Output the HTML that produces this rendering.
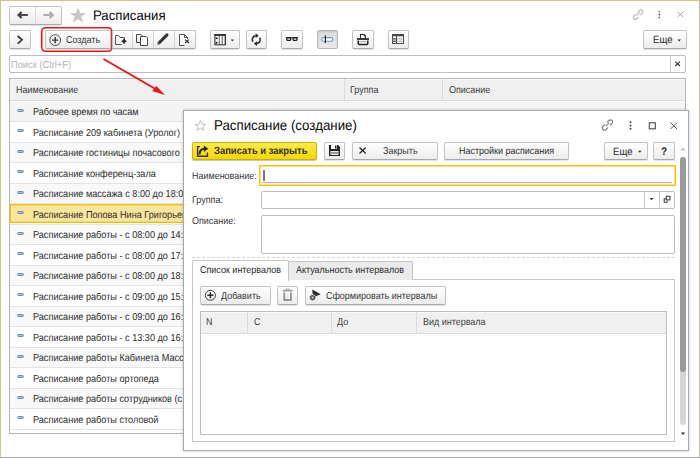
<!DOCTYPE html>
<html><head><meta charset="utf-8"><style>
html,body{margin:0;padding:0;width:700px;height:458px;overflow:hidden;background:#fff;position:relative;font-family:"Liberation Sans", sans-serif}
.a{position:absolute;box-sizing:content-box}
.t{position:absolute;white-space:nowrap;font-family:"Liberation Sans", sans-serif;text-rendering:geometricPrecision}
svg.a{overflow:visible}
.btn{position:absolute;border:1px solid #c3c3c3;border-bottom-color:#a9a9a9;border-radius:2px;background:linear-gradient(#ffffff,#ececec);box-shadow:0 1px 1px rgba(0,0,0,.12)}
</style></head><body>
<div class="a" style="left:0px;top:0px;width:700px;height:1px;background:#cfc688"></div>
<div class="a" style="left:0px;top:0px;width:1px;height:458px;background:#cfc688"></div>
<div class="a" style="left:699px;top:0px;width:1px;height:458px;background:#cfc688"></div>
<div class="a" style="left:0px;top:457px;width:700px;height:1px;background:#a8a8a8"></div>
<div class="btn" style="left:9px;top:6px;width:51px;height:17px;"></div>
<div class="a" style="left:35px;top:7px;width:1px;height:17px;background:#d8d8d8"></div>
<svg class="a" style="left:14px;top:9px;" width="40" height="13" viewBox="14 9 40 13"><path d="M21.6 12 L18.6 15 L21.6 18" fill="none" stroke="#444" stroke-width="2.3" stroke-linejoin="miter"/><path d="M19.2 15 H27.8" stroke="#444" stroke-width="1.9"/><path d="M49.6 12 L52.6 15 L49.6 18" fill="none" stroke="#ababab" stroke-width="2.3"/><path d="M43.2 15 H52" stroke="#ababab" stroke-width="1.9"/></svg>
<svg class="a" style="left:69px;top:7px;" width="18" height="16" viewBox="0 0 18 16"><path d="M9 0.5 L11.2 6 L17 6.2 L12.4 9.8 L14.2 15.5 L9 12.2 L3.8 15.5 L5.6 9.8 L1 6.2 L6.8 6 Z" fill="#c9c9c9"/></svg>
<span class="t" style="left:92.8px;top:7.84px;font-size:13.728px;line-height:16px;color:#0a0a0a;font-weight:400;transform:scaleX(0.9615);transform-origin:0 0;">Расписания</span>
<svg class="a" style="left:631.5px;top:9.3px;" width="13" height="11" viewBox="0 0 13 11"><g fill="none" stroke="#bdbdbd" stroke-width="1.2"><path d="M5.6 3.3 L7.5 1.4 a1.9 1.9 0 0 1 2.8 2.8 L8.4 6.1"/><path d="M6.6 7.9 L4.7 9.8 a1.9 1.9 0 0 1 -2.8 -2.8 L3.8 5.1"/><path d="M4.5 6.7 L7.7 3.5"/></g></svg>
<svg class="a" style="left:658px;top:10px;" width="3" height="9" viewBox="0 0 3 9"><circle cx="1.3" cy="1.6" r="0.9" fill="#6a6a6a"/><circle cx="1.3" cy="4.5" r="0.9" fill="#6a6a6a"/><circle cx="1.3" cy="7.4" r="0.9" fill="#6a6a6a"/></svg>
<svg class="a" style="left:676px;top:11px;" width="8" height="8" viewBox="676 11 8 8"><path d="M677.7 12 L683.1 17 M683.1 12 L677.7 17" stroke="#9a9a9a" stroke-width="0.9"/></svg>
<div class="btn" style="left:9px;top:30px;width:20px;height:17px;"></div>
<svg class="a" style="left:16px;top:35px;" width="8" height="10" viewBox="0 0 8 10"><path d="M1.7 1 L6 4.8 L1.7 8.6" fill="none" stroke="#333" stroke-width="1.7"/></svg>
<div class="btn" style="left:45px;top:30px;width:64px;height:17px;"></div>
<svg class="a" style="left:49px;top:34px;" width="13" height="13" viewBox="0 0 13 13"><circle cx="6.2" cy="6.1" r="5.4" fill="none" stroke="#505050" stroke-width="1"/><path d="M6.2 3 V9.2 M3.1 6.1 H9.3" stroke="#333" stroke-width="1.4"/></svg>
<span class="t" style="left:66px;top:35.07px;font-size:9.900px;line-height:12px;color:#383838;font-weight:400;transform:scaleX(0.9091);transform-origin:0 0;">Создать</span>
<svg class="a" style="left:40px;top:26px;" width="74" height="27" viewBox="0 0 74 27"><rect x="1.7" y="1.7" width="70.2" height="23.6" rx="4" fill="none" stroke="#ea1219" stroke-width="1.6"/></svg>
<div class="btn" style="left:112px;top:30px;width:82px;height:17px;"></div>
<div class="a" style="left:132px;top:31px;width:1px;height:17px;background:#d4d4d4"></div>
<div class="a" style="left:153px;top:31px;width:1px;height:17px;background:#d4d4d4"></div>
<div class="a" style="left:174px;top:31px;width:1px;height:17px;background:#d4d4d4"></div>
<svg class="a" style="left:112px;top:31px;" width="20" height="17" viewBox="112 31 20 17"><path d="M115.5 44.5 V35.5 H118.5 L120 37.5 H124.5 V39 M115.5 44.5 H121.5" fill="none" stroke="#555" stroke-width="1"/><path d="M121.7 41.2 H126.3 M124 38.9 V43.5" stroke="#2a2a2a" stroke-width="1.9"/></svg>
<svg class="a" style="left:133px;top:31px;" width="20" height="17" viewBox="133 31 20 17"><path d="M136.5 34.5 H141 L142.5 36 V36.5 M136.5 34.5 V42.5 H140.5" fill="none" stroke="#444" stroke-width="1"/><path d="M140.5 36.5 H146 L147.5 38 V45.5 H140.5 Z" fill="#fff" stroke="#444" stroke-width="1"/></svg>
<svg class="a" style="left:154px;top:31px;" width="20" height="17" viewBox="154 31 20 17"><path d="M159.3 42.6 L167 34.9" stroke="#333" stroke-width="3" stroke-linecap="round"/><path d="M157 45 L157.9 42 L160.1 44.1 Z" fill="#666"/></svg>
<svg class="a" style="left:175px;top:31px;" width="20" height="17" viewBox="175 31 20 17"><path d="M179.5 34.5 H184.5 L187.5 37.5 V39 M179.5 34.5 V45.5 H184.5 M184.5 34.5 V37.5 H187.5" fill="none" stroke="#555" stroke-width="1"/><path d="M185.2 39.6 L188.8 43 M188.8 39.6 L185.2 43" stroke="#333" stroke-width="1.3"/></svg>
<div class="btn" style="left:210px;top:30px;width:28px;height:17px;"></div>
<svg class="a" style="left:212px;top:32px;" width="16" height="15" viewBox="212 32 16 15"><rect x="214.5" y="34" width="11.5" height="11.2" fill="#8a8a8a"/><rect x="214.5" y="34" width="11.5" height="1.7" fill="#1e1e1e"/><rect x="215" y="34.5" width="10.5" height="10.2" fill="none" stroke="#333" stroke-width="1"/><rect x="215.6" y="36" width="3" height="8.2" fill="#fff"/><rect x="220" y="36" width="1.6" height="8.2" fill="#fff"/><rect x="223" y="36" width="1.4" height="8.2" fill="#fff"/><path d="M215.8 37 L218.2 38.2 L215.8 39.4 Z M215.8 41.6 L218.2 42.8 L215.8 44 Z" fill="#111"/></svg>
<svg class="a" style="left:229px;top:38px;" width="7" height="5" viewBox="229 38 7 5"><path d="M230.5 39.4 H234.3 L232.4 41.4 Z" fill="#444"/></svg>
<div class="btn" style="left:246px;top:30px;width:19px;height:17px;"></div>
<svg class="a" style="left:248px;top:32px;" width="17" height="15" viewBox="248 32 17 15"><g fill="none" stroke="#2a2a2a" stroke-width="1.6"><path d="M252.84 41.60 A4 4 0 0 1 255.61 35.66"/><path d="M259.76 37.60 A4 4 0 0 1 256.99 43.54"/></g><path d="M255.61 33.26 L258.81 35.66 L255.61 38.06 Z" fill="#2a2a2a"/><path d="M256.99 41.14 L253.79 43.54 L256.99 45.94 Z" fill="#2a2a2a"/></svg>
<div class="btn" style="left:281px;top:30px;width:20px;height:17px;"></div>
<svg class="a" style="left:284px;top:35px;" width="16" height="8" viewBox="284 35 16 8"><rect x="286.8" y="37.7" width="3.8" height="2.7" rx="0.9" fill="#fff" stroke="#1e1e1e" stroke-width="1.3"/><rect x="293.1" y="37.7" width="3.8" height="2.7" rx="0.9" fill="#fff" stroke="#1e1e1e" stroke-width="1.3"/><path d="M285.8 37.8 H298" stroke="#1e1e1e" stroke-width="1.1"/></svg>
<div class="a" style="left:317px;top:30px;width:19px;height:17px;border:1px solid #b9b9b9;border-radius:2px;background:linear-gradient(#dcdcdc,#e8e8e8);box-shadow:inset 0 1px 2px rgba(0,0,0,.12)"></div>
<svg class="a" style="left:318px;top:33px;" width="17" height="12" viewBox="318 33 17 12"><rect x="321.6" y="37.6" width="11.2" height="3.7" rx="1.85" fill="#fafafa" stroke="#6c9ccb" stroke-width="1.1"/><path d="M325.4 35.6 V42.9" stroke="#222" stroke-width="1.2"/></svg>
<div class="btn" style="left:352px;top:30px;width:20px;height:17px;"></div>
<svg class="a" style="left:354px;top:32px;" width="17" height="15" viewBox="354 32 17 15"><path d="M360.5 38.3 V34.5 H364 L365.5 36 V38.3" fill="#fff" stroke="#2a2a2a" stroke-width="1.1"/><path d="M364 34.5 V36 H365.5" fill="none" stroke="#2a2a2a" stroke-width="0.8"/><rect x="357" y="38.2" width="12" height="1.6" fill="#111"/><path d="M358.2 40.6 V43.6 Q358.2 44.6 359.2 44.6 H366.8 Q367.8 44.6 367.8 43.6 V40.6" fill="#fff" stroke="#222" stroke-width="1.5"/><path d="M359.5 41.8 H366.5" stroke="#888" stroke-width="0.8"/></svg>
<div class="btn" style="left:388px;top:30px;width:19px;height:17px;"></div>
<svg class="a" style="left:390px;top:32px;" width="16" height="14" viewBox="390 32 16 14"><rect x="392.5" y="34.5" width="11" height="9" fill="#fff" stroke="#4a4a4a" stroke-width="1"/><rect x="392.5" y="34.5" width="11" height="1.8" fill="#4a4a4a"/><path d="M392.5 38.9 H403.5 M392.5 41.2 H403.5" stroke="#9a9a9a" stroke-width="0.9"/><path d="M396.5 36 V43.5" stroke="#4a4a4a" stroke-width="1"/><path d="M392.5 38.9 H396.5 M392.5 41.2 H396.5" stroke="#444" stroke-width="1"/></svg>
<div class="btn" style="left:643px;top:30px;width:42px;height:17px;"></div>
<span class="t" style="left:652.6px;top:34.24px;font-size:10.560px;line-height:13px;color:#2a2a2a;font-weight:400;transform:scaleX(0.9091);transform-origin:0 0;">Еще</span>
<svg class="a" style="left:675px;top:37px;" width="8" height="6" viewBox="675 37 8 6"><path d="M677.4 39.6 H681 L679.2 41.6 Z" fill="#333"/></svg>
<div class="a" style="left:9px;top:55px;width:675px;height:16px;border:1px solid #bdbdbd;border-radius:2px;background:#fff"></div>
<div class="a" style="left:670px;top:56px;width:1px;height:16px;background:#c8c8c8"></div>
<svg class="a" style="left:673px;top:59px;" width="9" height="9" viewBox="673 59 9 9"><path d="M675.2 61.6 L680 66 M680 61.6 L675.2 66" stroke="#3a3a3a" stroke-width="1.2"/></svg>
<span class="t" style="left:11.3px;top:59.76px;font-size:10.230px;line-height:12px;color:#b4b4bc;font-weight:400;transform:scaleX(0.9091);transform-origin:0 0;">Поиск (Ctrl+F)</span>
<div class="a" style="left:9px;top:78px;width:675px;height:354px;border:1px solid #b5b5b5;background:#fff"></div>
<div class="a" style="left:10px;top:79px;width:675px;height:21px;background:#f0f0f0"></div>
<div class="a" style="left:10px;top:79px;width:675px;height:1px;background:#fafafa"></div>
<div class="a" style="left:10px;top:100px;width:675px;height:1px;background:#dcdcdc"></div>
<div class="a" style="left:344px;top:79px;width:1px;height:21px;background:#dadada"></div>
<div class="a" style="left:442px;top:79px;width:1px;height:21px;background:#dadada"></div>
<span class="t" style="left:15.8px;top:84.57px;font-size:9.900px;line-height:12px;color:#383838;font-weight:400;transform:scaleX(0.9091);transform-origin:0 0;">Наименование</span>
<span class="t" style="left:350.3px;top:84.57px;font-size:9.900px;line-height:12px;color:#383838;font-weight:400;transform:scaleX(0.9091);transform-origin:0 0;">Группа</span>
<span class="t" style="left:448.5px;top:84.57px;font-size:9.900px;line-height:12px;color:#383838;font-weight:400;transform:scaleX(0.9091);transform-origin:0 0;">Описание</span>
<div class="a" style="left:10px;top:102px;width:675px;height:19px;background:#f4f4f4"></div>
<div class="a" style="left:10px;top:121px;width:675px;height:1px;background:#e4e4e4"></div>
<svg class="a" style="left:16px;top:108px;" width="10" height="6" viewBox="16 108 10 6"><rect x="17.5" y="109.5" width="6" height="2" rx="1" fill="#adc4d9" stroke="#6b8aa9" stroke-width="1"/></svg>
<span class="t" style="left:32.8px;top:107.21px;font-size:10.065px;line-height:12px;color:#2c2c2c;font-weight:400;transform:scaleX(0.9091);transform-origin:0 0;">Рабочее время по часам</span>
<div class="a" style="left:10px;top:142px;width:675px;height:1px;background:#e4e4e4"></div>
<svg class="a" style="left:16px;top:128px;" width="10" height="6" viewBox="16 128 10 6"><rect x="17.5" y="129.5" width="6" height="2" rx="1" fill="#adc4d9" stroke="#6b8aa9" stroke-width="1"/></svg>
<span class="t" style="left:32.8px;top:127.71px;font-size:10.065px;line-height:12px;color:#2c2c2c;font-weight:400;transform:scaleX(0.9091);transform-origin:0 0;">Расписание 209 кабинета (Уролог)</span>
<div class="a" style="left:10px;top:143px;width:675px;height:19px;background:#f9f9f9"></div>
<div class="a" style="left:10px;top:162px;width:675px;height:1px;background:#e4e4e4"></div>
<svg class="a" style="left:16px;top:149px;" width="10" height="6" viewBox="16 149 10 6"><rect x="17.5" y="150.5" width="6" height="2" rx="1" fill="#adc4d9" stroke="#6b8aa9" stroke-width="1"/></svg>
<span class="t" style="left:32.8px;top:148.21px;font-size:10.065px;line-height:12px;color:#2c2c2c;font-weight:400;transform:scaleX(0.9091);transform-origin:0 0;">Расписание гостиницы почасового</span>
<div class="a" style="left:10px;top:183px;width:675px;height:1px;background:#e4e4e4"></div>
<svg class="a" style="left:16px;top:169px;" width="10" height="6" viewBox="16 169 10 6"><rect x="17.5" y="170.5" width="6" height="2" rx="1" fill="#adc4d9" stroke="#6b8aa9" stroke-width="1"/></svg>
<span class="t" style="left:32.8px;top:168.71px;font-size:10.065px;line-height:12px;color:#2c2c2c;font-weight:400;transform:scaleX(0.9091);transform-origin:0 0;">Расписание конференц-зала</span>
<div class="a" style="left:10px;top:184px;width:675px;height:19px;background:#f9f9f9"></div>
<div class="a" style="left:10px;top:203px;width:675px;height:1px;background:#e4e4e4"></div>
<svg class="a" style="left:16px;top:190px;" width="10" height="6" viewBox="16 190 10 6"><rect x="17.5" y="191.5" width="6" height="2" rx="1" fill="#adc4d9" stroke="#6b8aa9" stroke-width="1"/></svg>
<span class="t" style="left:32.8px;top:189.21px;font-size:10.065px;line-height:12px;color:#2c2c2c;font-weight:400;transform:scaleX(0.9091);transform-origin:0 0;">Расписание массажа с 8:00 до 18:00</span>
<div class="a" style="left:10px;top:204px;width:673px;height:17px;border:1px solid #f2c000;background:#fbe59c;box-shadow:inset 0 1px 0 #f8d770, inset 0 -1px 0 #f8d770"></div>
<div class="a" style="left:10px;top:224px;width:675px;height:1px;background:#e4e4e4"></div>
<svg class="a" style="left:16px;top:210px;" width="10" height="6" viewBox="16 210 10 6"><rect x="17.5" y="211.5" width="6" height="2" rx="1" fill="#adc4d9" stroke="#6b8aa9" stroke-width="1"/></svg>
<span class="t" style="left:32.8px;top:209.71px;font-size:10.065px;line-height:12px;color:#2c2c2c;font-weight:400;transform:scaleX(0.9091);transform-origin:0 0;">Расписание Попова Нина Григорьевна</span>
<div class="a" style="left:10px;top:225px;width:675px;height:19px;background:#f9f9f9"></div>
<div class="a" style="left:10px;top:244px;width:675px;height:1px;background:#e4e4e4"></div>
<svg class="a" style="left:16px;top:231px;" width="10" height="6" viewBox="16 231 10 6"><rect x="17.5" y="232.5" width="6" height="2" rx="1" fill="#adc4d9" stroke="#6b8aa9" stroke-width="1"/></svg>
<span class="t" style="left:32.8px;top:230.21px;font-size:10.065px;line-height:12px;color:#2c2c2c;font-weight:400;transform:scaleX(0.9091);transform-origin:0 0;">Расписание работы - с 08:00 до 14:00</span>
<div class="a" style="left:10px;top:265px;width:675px;height:1px;background:#e4e4e4"></div>
<svg class="a" style="left:16px;top:251px;" width="10" height="6" viewBox="16 251 10 6"><rect x="17.5" y="252.5" width="6" height="2" rx="1" fill="#adc4d9" stroke="#6b8aa9" stroke-width="1"/></svg>
<span class="t" style="left:32.8px;top:250.71px;font-size:10.065px;line-height:12px;color:#2c2c2c;font-weight:400;transform:scaleX(0.9091);transform-origin:0 0;">Расписание работы - с 08:00 до 17:00</span>
<div class="a" style="left:10px;top:266px;width:675px;height:19px;background:#f9f9f9"></div>
<div class="a" style="left:10px;top:285px;width:675px;height:1px;background:#e4e4e4"></div>
<svg class="a" style="left:16px;top:272px;" width="10" height="6" viewBox="16 272 10 6"><rect x="17.5" y="273.5" width="6" height="2" rx="1" fill="#adc4d9" stroke="#6b8aa9" stroke-width="1"/></svg>
<span class="t" style="left:32.8px;top:271.21px;font-size:10.065px;line-height:12px;color:#2c2c2c;font-weight:400;transform:scaleX(0.9091);transform-origin:0 0;">Расписание работы - с 08:00 до 18:00</span>
<div class="a" style="left:10px;top:306px;width:675px;height:1px;background:#e4e4e4"></div>
<svg class="a" style="left:16px;top:292px;" width="10" height="6" viewBox="16 292 10 6"><rect x="17.5" y="293.5" width="6" height="2" rx="1" fill="#adc4d9" stroke="#6b8aa9" stroke-width="1"/></svg>
<span class="t" style="left:32.8px;top:291.71px;font-size:10.065px;line-height:12px;color:#2c2c2c;font-weight:400;transform:scaleX(0.9091);transform-origin:0 0;">Расписание работы - с 09:00 до 15:00</span>
<div class="a" style="left:10px;top:307px;width:675px;height:19px;background:#f9f9f9"></div>
<div class="a" style="left:10px;top:326px;width:675px;height:1px;background:#e4e4e4"></div>
<svg class="a" style="left:16px;top:313px;" width="10" height="6" viewBox="16 313 10 6"><rect x="17.5" y="314.5" width="6" height="2" rx="1" fill="#adc4d9" stroke="#6b8aa9" stroke-width="1"/></svg>
<span class="t" style="left:32.8px;top:312.21px;font-size:10.065px;line-height:12px;color:#2c2c2c;font-weight:400;transform:scaleX(0.9091);transform-origin:0 0;">Расписание работы - с 09:00 до 16:00</span>
<div class="a" style="left:10px;top:347px;width:675px;height:1px;background:#e4e4e4"></div>
<svg class="a" style="left:16px;top:333px;" width="10" height="6" viewBox="16 333 10 6"><rect x="17.5" y="334.5" width="6" height="2" rx="1" fill="#adc4d9" stroke="#6b8aa9" stroke-width="1"/></svg>
<span class="t" style="left:32.8px;top:332.71px;font-size:10.065px;line-height:12px;color:#2c2c2c;font-weight:400;transform:scaleX(0.9091);transform-origin:0 0;">Расписание работы - с 13:30 до 16:00</span>
<div class="a" style="left:10px;top:348px;width:675px;height:19px;background:#f9f9f9"></div>
<div class="a" style="left:10px;top:367px;width:675px;height:1px;background:#e4e4e4"></div>
<svg class="a" style="left:16px;top:354px;" width="10" height="6" viewBox="16 354 10 6"><rect x="17.5" y="355.5" width="6" height="2" rx="1" fill="#adc4d9" stroke="#6b8aa9" stroke-width="1"/></svg>
<span class="t" style="left:32.8px;top:353.21px;font-size:10.065px;line-height:12px;color:#2c2c2c;font-weight:400;transform:scaleX(0.9091);transform-origin:0 0;">Расписание работы Кабинета Массажа</span>
<div class="a" style="left:10px;top:388px;width:675px;height:1px;background:#e4e4e4"></div>
<svg class="a" style="left:16px;top:374px;" width="10" height="6" viewBox="16 374 10 6"><rect x="17.5" y="375.5" width="6" height="2" rx="1" fill="#adc4d9" stroke="#6b8aa9" stroke-width="1"/></svg>
<span class="t" style="left:32.8px;top:373.71px;font-size:10.065px;line-height:12px;color:#2c2c2c;font-weight:400;transform:scaleX(0.9091);transform-origin:0 0;">Расписание работы ортопеда</span>
<div class="a" style="left:10px;top:389px;width:675px;height:19px;background:#f9f9f9"></div>
<div class="a" style="left:10px;top:408px;width:675px;height:1px;background:#e4e4e4"></div>
<svg class="a" style="left:16px;top:395px;" width="10" height="6" viewBox="16 395 10 6"><rect x="17.5" y="396.5" width="6" height="2" rx="1" fill="#adc4d9" stroke="#6b8aa9" stroke-width="1"/></svg>
<span class="t" style="left:32.8px;top:394.21px;font-size:10.065px;line-height:12px;color:#2c2c2c;font-weight:400;transform:scaleX(0.9091);transform-origin:0 0;">Расписание работы сотрудников (с</span>
<div class="a" style="left:10px;top:429px;width:675px;height:1px;background:#e4e4e4"></div>
<svg class="a" style="left:16px;top:415px;" width="10" height="6" viewBox="16 415 10 6"><rect x="17.5" y="416.5" width="6" height="2" rx="1" fill="#adc4d9" stroke="#6b8aa9" stroke-width="1"/></svg>
<span class="t" style="left:32.8px;top:414.71px;font-size:10.065px;line-height:12px;color:#2c2c2c;font-weight:400;transform:scaleX(0.9091);transform-origin:0 0;">Расписание работы столовой</span>
<svg class="a" style="left:95px;top:52px;" width="80" height="50" viewBox="0 0 80 50"><path d="M8.5 7 L64 39" stroke="#ec1515" stroke-width="1.9"/><path d="M70 43 L57.2 39 L61.4 34 Z" fill="#ec1515"/></svg>
<div class="a" style="left:183px;top:110px;width:504px;height:339px;border:1px solid #a9a9a9;background:#fff;box-shadow:0 0 3px rgba(0,0,0,.22)"></div>
<svg class="a" style="left:193px;top:119px;" width="15" height="13" viewBox="193 119 15 13"><path d="M200.4 120.6 L201.9 124.2 L205.6 124.4 L202.7 126.7 L203.7 130.3 L200.4 128.2 L197.1 130.3 L198.1 126.7 L195.2 124.4 L198.9 124.2 Z" fill="none" stroke="#b8b8b8" stroke-width="0.9"/></svg>
<span class="t" style="left:214px;top:117.12px;font-size:14.098px;line-height:17px;color:#0a0a0a;font-weight:400;transform:scaleX(0.9434);transform-origin:0 0;">Расписание (создание)</span>
<svg class="a" style="left:601px;top:119px;" width="14" height="12" viewBox="0 0 14 12"><g fill="none" stroke="#808080" stroke-width="1.1"><path d="M6 3.5 L8 1.5 a2 2 0 0 1 3 3 L9 6.5"/><path d="M7 8.5 L5 10.5 a2 2 0 0 1 -3 -3 L4 5.5"/><path d="M4.8 7.2 L8.2 3.8"/></g></svg>
<svg class="a" style="left:629px;top:121px;" width="3" height="9" viewBox="0 0 3 9"><circle cx="1.5" cy="1.3" r="1" fill="#444"/><circle cx="1.5" cy="4.5" r="1" fill="#444"/><circle cx="1.5" cy="7.7" r="1" fill="#444"/></svg>
<svg class="a" style="left:648px;top:121px;" width="9" height="9" viewBox="0 0 9 9"><rect x="1.3" y="1.8" width="6" height="6" fill="none" stroke="#484848" stroke-width="1.1"/></svg>
<svg class="a" style="left:670px;top:122px;" width="8" height="8" viewBox="0 0 8 8"><path d="M0.5 0.5 L7 7 M7 0.5 L0.5 7" stroke="#555" stroke-width="1"/></svg>
<div class="a" style="left:192px;top:142px;width:123px;height:16px;border:1px solid #c9b200;border-radius:2px;background:linear-gradient(#ffe94d,#f5d800);box-shadow:0 1px 1px rgba(0,0,0,.25)"></div>
<svg class="a" style="left:195px;top:144px;" width="15" height="15" viewBox="195 144 15 15"><path d="M200 146.6 H197.6 V156.2 H207.4 V152.5" fill="none" stroke="#333" stroke-width="1.4"/><path d="M199.6 154.5 C199.6 150.5 201.5 148.8 204.5 148.8" fill="none" stroke="#2a2a2a" stroke-width="2"/><path d="M203.8 145.6 L208.4 148.8 L203.8 152 Z" fill="#2a2a2a"/></svg>
<span class="t" style="left:213.5px;top:146.40px;font-size:10.395px;line-height:12px;color:#303030;font-weight:700;transform:scaleX(0.9091);transform-origin:0 0;">Записать и закрыть</span>
<div class="btn" style="left:324px;top:142px;width:19px;height:16px;"></div>
<svg class="a" style="left:328px;top:144px;" width="13" height="13" viewBox="0 0 13 13"><path d="M1 1 H10 L12 3 V12 H1 Z" fill="#222"/><rect x="3" y="1" width="6" height="4" fill="#fff"/><rect x="7" y="1.5" width="1.5" height="3" fill="#222"/><rect x="2.5" y="7" width="8" height="4" fill="#eee"/><path d="M3 9 H10" stroke="#222" stroke-width="0.8"/></svg>
<div class="btn" style="left:352px;top:142px;width:84px;height:16px;"></div>
<svg class="a" style="left:357px;top:145px;" width="11" height="11" viewBox="357 145 11 11"><path d="M359.5 147.5 L365.8 153.6 M365.8 147.5 L359.5 153.6" stroke="#2e2e2e" stroke-width="1.35"/></svg>
<span class="t" style="left:382.9px;top:146.27px;font-size:9.900px;line-height:12px;color:#383838;font-weight:400;transform:scaleX(0.9091);transform-origin:0 0;">Закрыть</span>
<div class="btn" style="left:444px;top:142px;width:123px;height:16px;"></div>
<span class="t" style="left:459px;top:146.27px;font-size:9.900px;line-height:12px;color:#2a2a2a;font-weight:400;transform:scaleX(0.9091);transform-origin:0 0;">Настройки расписания</span>
<div class="btn" style="left:604px;top:142px;width:42px;height:16px;"></div>
<span class="t" style="left:613.4px;top:145.64px;font-size:10.560px;line-height:13px;color:#2a2a2a;font-weight:400;transform:scaleX(0.9091);transform-origin:0 0;">Еще</span>
<svg class="a" style="left:636px;top:149px;" width="8" height="5" viewBox="636 149 8 5"><path d="M638.1 150.8 H641.5 L639.8 152.8 Z" fill="#333"/></svg>
<div class="btn" style="left:653px;top:142px;width:20px;height:16px;"></div>
<span class="t" style="left:660.8px;top:145.59px;font-size:11.000px;line-height:13px;color:#222;font-weight:700;transform:scaleX(0.9091);transform-origin:0 0;">?</span>
<svg class="a" style="left:680px;top:147px;" width="6" height="4" viewBox="0 0 6 4"><path d="M0 3.5 H6 L3 0 Z" fill="#ccc"/></svg>
<div class="a" style="left:680px;top:157px;width:6px;height:268px;border-radius:3px;background:#d6d6d6"></div>
<div class="a" style="left:680px;top:157px;width:6px;height:215px;border-radius:3px;background:#9a9a9a"></div>
<svg class="a" style="left:679px;top:430px;" width="8" height="7" viewBox="679 430 8 7"><path d="M680.8 432.4 H685.2 L683 435 Z" fill="#333"/></svg>
<span class="t" style="left:192.1px;top:170.97px;font-size:9.900px;line-height:12px;color:#363636;font-weight:400;transform:scaleX(0.9091);transform-origin:0 0;">Наименование:</span>
<div class="a" style="left:259px;top:165px;width:415px;height:19px;border:1px solid #f4c20d;box-shadow:inset 0 0 0 1px #fce27a"></div>
<div class="a" style="left:262px;top:182px;width:410px;height:1px;background:#f59a9a"></div>
<div class="a" style="left:263px;top:170px;width:2px;height:11px;background:#7a7a7a"></div>
<span class="t" style="left:192.1px;top:194.97px;font-size:9.900px;line-height:12px;color:#363636;font-weight:400;transform:scaleX(0.9091);transform-origin:0 0;">Группа:</span>
<div class="a" style="left:261px;top:191px;width:412px;height:16px;border:1px solid #bdbdbd;border-radius:2px"></div>
<div class="a" style="left:644px;top:192px;width:1px;height:16px;background:#c8c8c8"></div>
<div class="a" style="left:659px;top:192px;width:1px;height:16px;background:#c8c8c8"></div>
<svg class="a" style="left:648px;top:196px;" width="8" height="6" viewBox="648 196 8 6"><path d="M649.6 198 H653.6 L651.6 200.2 Z" fill="#333"/></svg>
<svg class="a" style="left:662px;top:194px;" width="10" height="10" viewBox="662 194 10 10"><path d="M666 198.8 H664.2 V202.2 H667.2 V201" fill="none" stroke="#444" stroke-width="1.1"/><rect x="666.3" y="196.3" width="3.6" height="3.6" fill="#fff" stroke="#444" stroke-width="1.1"/></svg>
<span class="t" style="left:192.1px;top:216.27px;font-size:9.900px;line-height:12px;color:#363636;font-weight:400;transform:scaleX(0.9091);transform-origin:0 0;">Описание:</span>
<div class="a" style="left:261px;top:215px;width:412px;height:37px;border:1px solid #bdbdbd;border-radius:2px"></div>
<div class="a" style="left:192px;top:257px;width:483px;height:0;border-top:1px dashed #d4d4d4"></div>
<div class="a" style="left:192px;top:279px;width:481px;height:161px;border:1px solid #c4c4c4"></div>
<div class="a" style="left:288px;top:261px;width:123px;height:18px;border:1px solid #c4c4c4;border-bottom:none;background:#ebebeb;border-radius:2px 2px 0 0"></div>
<div class="a" style="left:192px;top:260px;width:95px;height:20px;border:1px solid #c4c4c4;border-bottom:none;background:#fff;border-radius:2px 2px 0 0"></div>
<span class="t" style="left:200.1px;top:264.97px;font-size:9.900px;line-height:12px;color:#262626;font-weight:400;transform:scaleX(0.9091);transform-origin:0 0;">Список интервалов</span>
<span class="t" style="left:296px;top:264.97px;font-size:9.900px;line-height:12px;color:#2a2a2a;font-weight:400;transform:scaleX(0.9091);transform-origin:0 0;">Актуальность интервалов</span>
<div class="btn" style="left:200px;top:286px;width:69px;height:17px;"></div>
<svg class="a" style="left:202px;top:288px;" width="16" height="15" viewBox="202 288 16 15"><circle cx="210.4" cy="295.3" r="5" fill="none" stroke="#3a3a3a" stroke-width="1"/><path d="M210.4 292.3 V298.3 M207.4 295.3 H213.4" stroke="#2a2a2a" stroke-width="1.4"/></svg>
<span class="t" style="left:220.8px;top:291.07px;font-size:9.900px;line-height:12px;color:#383838;font-weight:400;transform:scaleX(0.9091);transform-origin:0 0;">Добавить</span>
<div class="btn" style="left:277px;top:286px;width:19px;height:17px;"></div>
<svg class="a" style="left:280px;top:287px;" width="15" height="16" viewBox="280 287 15 16"><path d="M282.8 290.6 H292.6" stroke="#989898" stroke-width="1.7"/><path d="M286 289.6 V289 H289.4 V289.6" fill="none" stroke="#aaa" stroke-width="1"/><path d="M284.3 292.6 V300 H290.9 V292.6" fill="none" stroke="#959595" stroke-width="1.9"/><path d="M287.6 293.5 V299" stroke="#dedede" stroke-width="0.8"/></svg>
<div class="btn" style="left:305px;top:286px;width:139px;height:17px;"></div>
<svg class="a" style="left:307px;top:288px;" width="16" height="15" viewBox="307 288 16 15"><path d="M312.3 289.6 L320.6 294.3 L316 296.2 L312.5 293.6 Z" fill="#2e2e2e"/><circle cx="312.6" cy="297.6" r="1.9" fill="#bbb" stroke="#333" stroke-width="1.1"/><circle cx="312.6" cy="297.6" r="2.7" fill="none" stroke="#333" stroke-width="0.8" stroke-dasharray="1 1.12"/></svg>
<span class="t" style="left:326.3px;top:291.07px;font-size:9.900px;line-height:12px;color:#383838;font-weight:400;transform:scaleX(0.9091);transform-origin:0 0;">Сформировать интервалы</span>
<div class="a" style="left:200px;top:311px;width:465px;height:122px;border:1px solid #bdbdbd"></div>
<div class="a" style="left:201px;top:312px;width:465px;height:21px;background:#f0f0f0"></div>
<div class="a" style="left:201px;top:312px;width:465px;height:1px;background:#fafafa"></div>
<div class="a" style="left:201px;top:333px;width:465px;height:1px;background:#dcdcdc"></div>
<div class="a" style="left:247px;top:312px;width:1px;height:21px;background:#dadada"></div>
<div class="a" style="left:331px;top:312px;width:1px;height:21px;background:#dadada"></div>
<div class="a" style="left:416px;top:312px;width:1px;height:21px;background:#dadada"></div>
<span class="t" style="left:206px;top:316.77px;font-size:9.900px;line-height:12px;color:#404040;font-weight:400;transform:scaleX(0.9091);transform-origin:0 0;">N</span>
<span class="t" style="left:253.5px;top:316.77px;font-size:9.900px;line-height:12px;color:#404040;font-weight:400;transform:scaleX(0.9091);transform-origin:0 0;">С</span>
<span class="t" style="left:337.4px;top:316.77px;font-size:9.900px;line-height:12px;color:#404040;font-weight:400;transform:scaleX(0.9091);transform-origin:0 0;">До</span>
<span class="t" style="left:422.8px;top:316.57px;font-size:9.900px;line-height:12px;color:#404040;font-weight:400;transform:scaleX(0.9091);transform-origin:0 0;">Вид интервала</span>
</body></html>
